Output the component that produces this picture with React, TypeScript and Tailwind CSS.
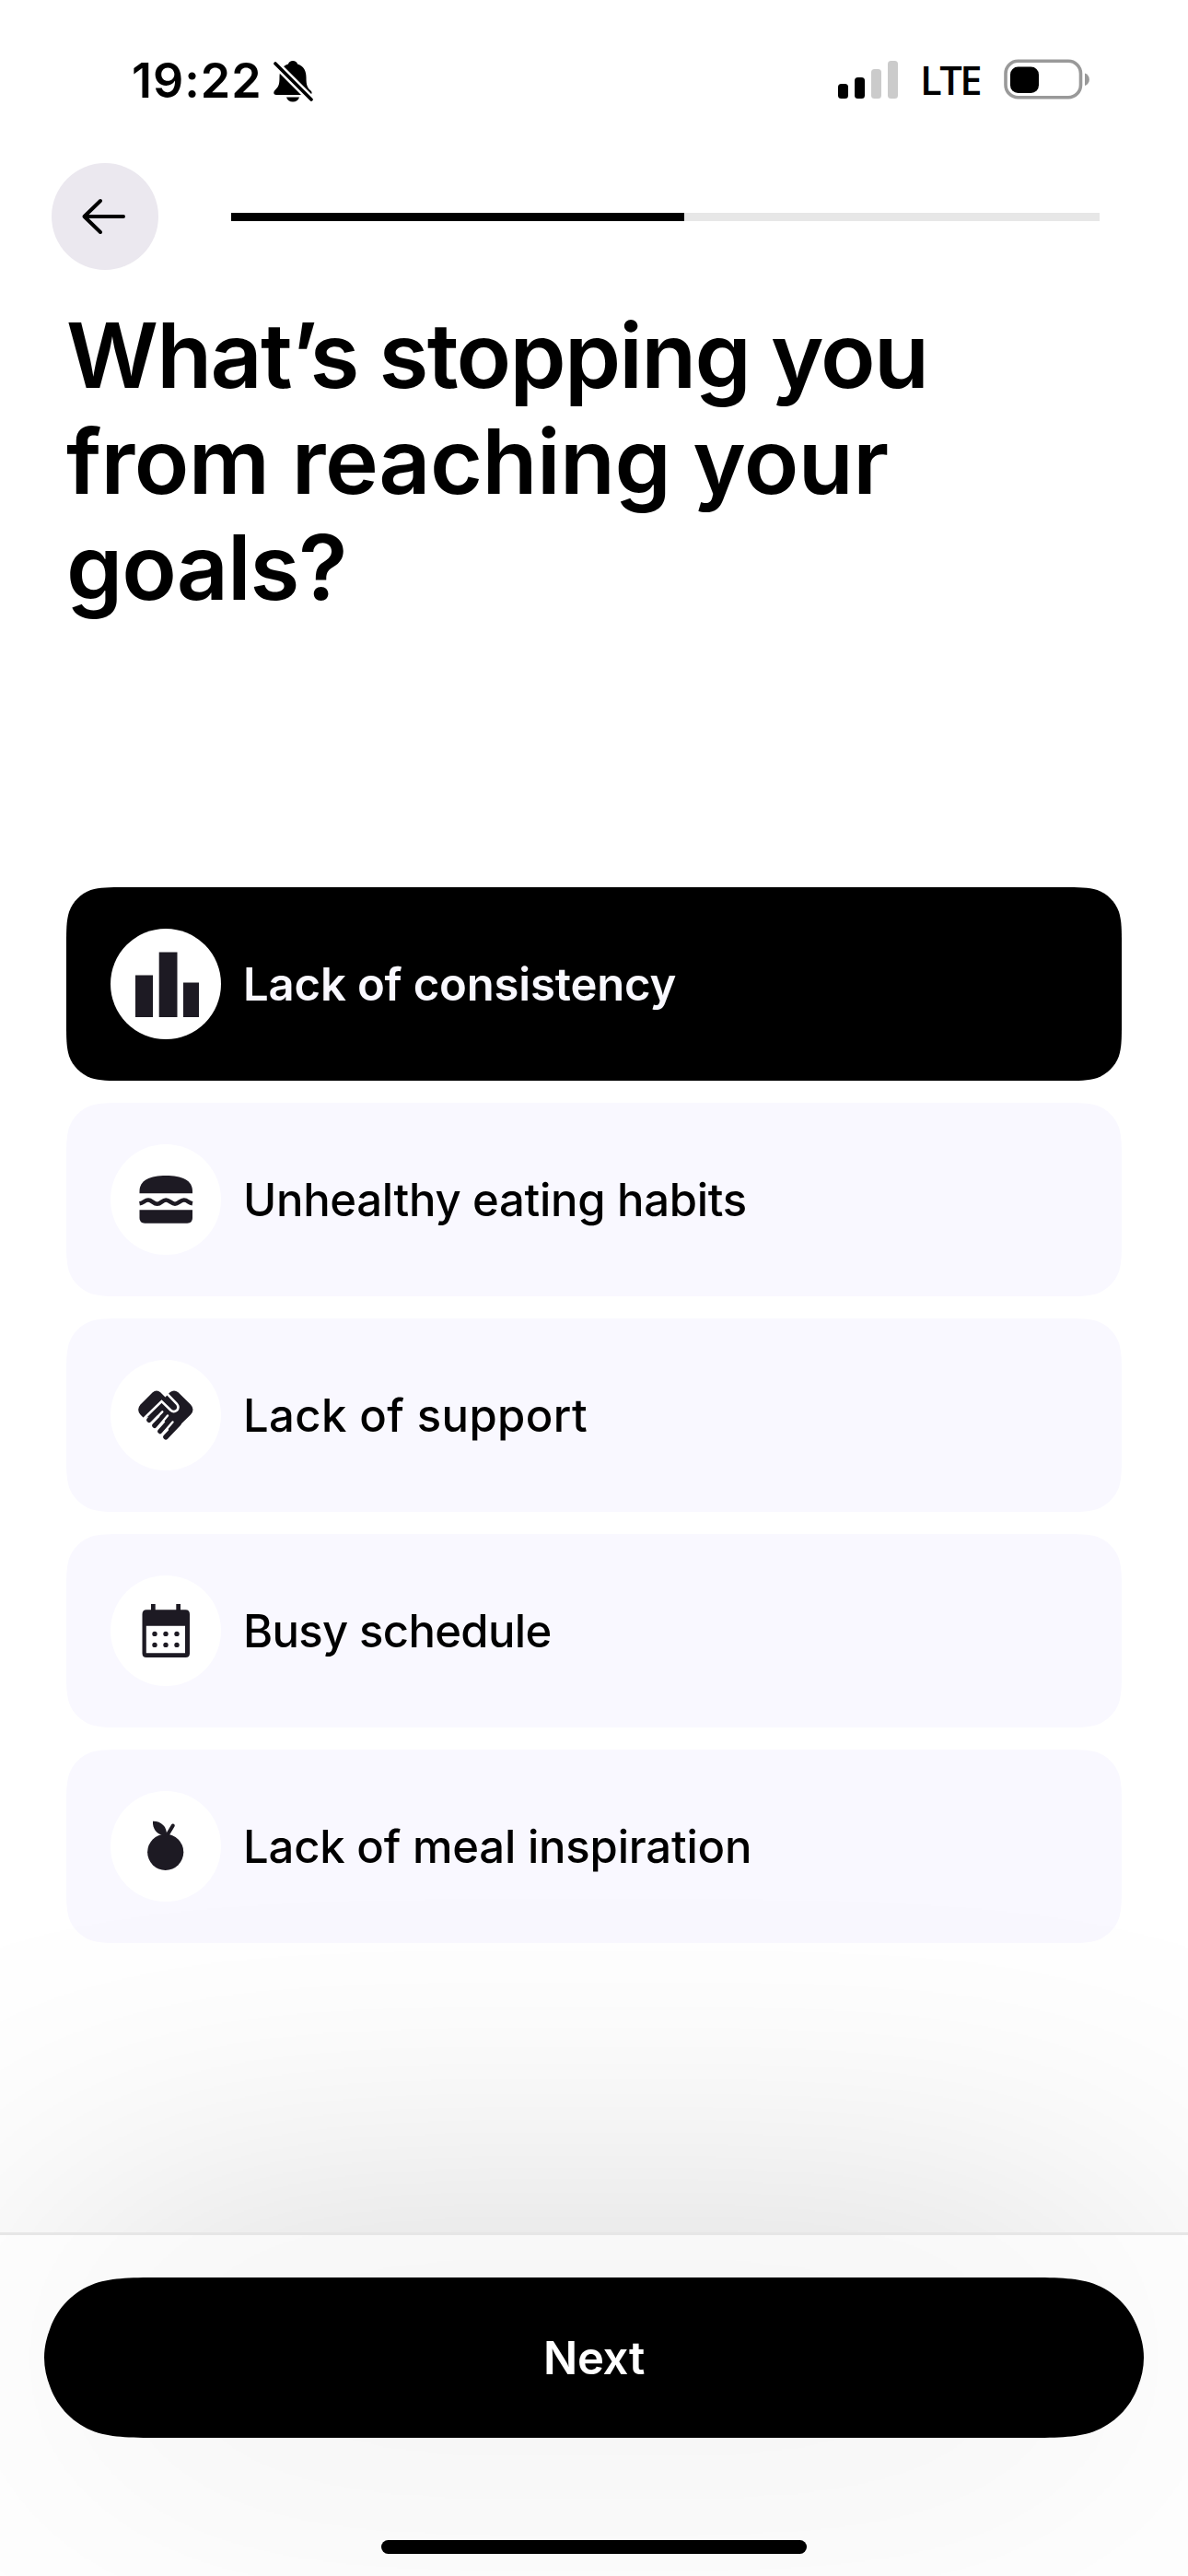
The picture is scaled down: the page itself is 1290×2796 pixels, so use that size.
import type { ReactNode } from "react";

const INK = "#1d1a23";

function BarsIcon() {
  return (
    <svg className="size-[120px]" viewBox="0 0 120 120" fill={INK}>
      <path d="M27 50.5h19V96H27zM52.7 25.5h19.8V96H52.7zM79 58.5h17V96H79z" />
    </svg>
  );
}

function BurgerIcon() {
  return (
    <svg className="size-[120px]" viewBox="0 0 120 120" fill={INK}>
      <path d="M31.5 53.3V51C31.5 39 43 34 60.2 34S89 39 89 51v2.300z" />
      <path
        d="M31.500 64.300C36 63.500 37 60.600 41 60.600S46.500 64.700 50.700 64.700 56 60.600 60.200 60.600 66 64.700 70 64.700 75.500 60.600 79.700 60.600 84.500 63.500 89 64.300"
        fill="none"
        stroke={INK}
        strokeWidth="4.500"
      />
      <path d="M31.500 71.300H89V80q0 5.700-5.700 5.700H37.200q-5.700 0-5.700-5.700z" />
    </svg>
  );
}

function HandshakeIcon() {
  return (
    <svg className="size-[120px]" viewBox="0 0 120 120" fill={INK} strokeLinecap="round">
      <path d="M45.500 35.500Q50 31.500 54.500 35.500L59.500 40.500 64.500 35.300Q69 31.700 73.500 35.300L87 48.500Q92 54 87 59.500L64 82 62 70 52 60 36 63 32.500 59.500Q27.800 54 32.500 48.500z" />
      <g stroke={INK} strokeWidth="5.600">
        <path d="M57 50L42 65.200" />
        <path d="M61 58L48 71.300" />
        <path d="M66 64L54 77.500" />
        <path d="M74 69L60 83.700" />
      </g>
      <path
        d="M61.800 37.200L71.800 47.500Q75 51.500 72 54.800 68.500 57.500 65.200 54.500L55.500 45 36.500 63.500"
        fill="none"
        stroke="#fff"
        strokeWidth="2.600"
      />
      <path
        d="M56.300 56.300L43.500 69.500M62 60.500L49.500 75.500M67.500 67.500L55.500 81.500"
        stroke="#fff"
        strokeWidth="2.400"
      />
    </svg>
  );
}

function CalendarIcon() {
  return (
    <svg className="size-[120px]" viewBox="0 0 120 120" fill={INK}>
      <path d="M44 31h4.700v8H44zM71.300 31H76v8h-4.700z" />
      <path
        fillRule="evenodd"
        d="M39 37.300H81.500Q86 37.300 86 42V84.500Q86 89 81.500 89H39Q34.500 89 34.500 84.500V42Q34.500 37.300 39 37.300zM38.800 54.700V84.200H81V54.700z"
      />
      {[48, 60, 72].map((x) => (
        <g key={x}>
          <circle cx={x} cy="63.400" r="2.700" />
          <circle cx={x} cy="75.400" r="2.700" />
        </g>
      ))}
    </svg>
  );
}

function FruitIcon() {
  return (
    <svg className="size-[120px]" viewBox="0 0 120 120" fill={INK}>
      <circle cx="59.700" cy="66.300" r="19.600" />
      <path d="M46 32.700C55 32.500 61.500 38.500 61 48H57C50 46.500 45.500 41 46 32.700z" />
      <path d="M61.500 48L67.800 37.500" stroke={INK} strokeWidth="4" strokeLinecap="round" />
    </svg>
  );
}

type Option = { label: string; icon: ReactNode; text: string; selected?: boolean };

const options: Option[] = [
  { label: "Lack of consistency", icon: <BarsIcon />, text: "tracking-[-0.15px]", selected: true },
  { label: "Unhealthy eating habits", icon: <BurgerIcon />, text: "tracking-[-0.3px]" },
  { label: "Lack of support", icon: <HandshakeIcon />, text: "tracking-[0.4px]" },
  { label: "Busy schedule", icon: <CalendarIcon />, text: "tracking-[-0.65px]" },
  { label: "Lack of meal inspiration", icon: <FruitIcon />, text: "tracking-[-0.2px]" },
];

function OptionCard({ label, icon, text, selected }: Option) {
  return (
    <button
      className={`flex h-[210px] w-full items-center gap-6 px-12 [clip-path:path('M64.200_0H1081.800C1100.300_0_1109.500_0_1119.500_3.100C1130.300_7.100_1138.900_15.700_1142.900_26.500C1146_36.500_1146_45.700_1146_64.200V145.800C1146_164.300_1146_173.500_1142.900_183.500C1138.900_194.300_1130.300_202.900_1119.500_206.900C1109.500_210_1100.300_210_1081.800_210H64.200C45.700_210_36.500_210_26.500_206.900C15.700_202.900_7.100_194.300_3.100_183.500C0_173.500_0_164.300_0_145.800V64.200C0_45.700_0_36.500_3.100_26.500C7.100_15.700_15.700_7.100_26.500_3.100C36.500_0_45.700_0_64.200_0Z')] ${
        selected ? "bg-black text-[#f9f8ff]" : "bg-[#f9f8ff] text-black"
      }`}
    >
      <span className="flex size-[120px] shrink-0 items-center justify-center rounded-full bg-white">
        {icon}
      </span>
      <span
        className={`whitespace-nowrap pt-[2px] text-[49px] leading-[60px] ${selected ? "font-semibold" : "font-medium"} ${text}`}
      >
        {label}
      </span>
    </button>
  );
}

function StatusBar() {
  return (
    <header className="flex h-[177px] items-start justify-between pl-[143px] pr-[106px] pt-[56px]">
      <div className="flex items-center gap-[11px]">
        <span className="text-[52px] font-semibold leading-[64px] tracking-[1px]">19:22</span>
        <svg className="mb-px h-[48px] w-[44px]" viewBox="0 0 44 48">
          <path d="M22 2c2.500 0 4.500 1.500 5 3.500C34 8 36.500 13 36.500 20c0 8 1 11 5 14.500 2 2 1 4.500-1.500 4.500H4c-3 0-3.500-3-1.500-5C6.500 30 7.500 28 7.500 20 7.500 13 10 8 17 5.500 17.500 3.500 19.500 2 22 2zM15 41.500h14c-1 3.500-3.500 5-7 5s-6-1.500-7-5z" />
          <path d="M3 5l39 39" stroke="#fff" strokeWidth="8.500" />
          <path d="M3 5l39 39" stroke="#000" strokeWidth="3.600" strokeLinecap="round" />
        </svg>
      </div>
      <div className="flex items-center pt-[4px]">
        <svg className="mb-[2px] h-[44px] w-[66px]" viewBox="0 0 66 44">
          <rect x="0" y="28" width="11" height="16" rx="3.500" />
          <rect x="18" y="21" width="11" height="23" rx="3.500" />
          <rect x="36" y="12" width="11" height="32" rx="3.500" fill="#cbcbcb" />
          <rect x="54" y="3" width="11" height="41" rx="3.500" fill="#cbcbcb" />
        </svg>
        <span className="ml-[23px] w-[91px] pt-[2px] font-['Open_Sans'] text-[43.500px] font-semibold leading-[50px] tracking-[-2.500px]">
          LTE
        </span>
        <svg className="h-[44px] w-[94px]" viewBox="0 0 94 44">
          <rect x="2" y="2.200" width="81.500" height="39.600" rx="13.500" fill="none" stroke="#999" strokeWidth="3.600" />
          <rect x="7" y="8.500" width="31" height="28.500" rx="8.500" />
          <path d="M88 15.500c6.500 2 6.500 11.500 0 13.500z" fill="#999" />
        </svg>
      </div>
    </header>
  );
}

export default function App() {
  return (
    <div className="flex h-[2796px] w-[1290px] flex-col overflow-hidden bg-white font-['Inter',sans-serif] text-black">
      <StatusBar />

      <div className="flex h-[116px] items-center pl-[56px]">
        <button className="flex size-[116px] items-center justify-center rounded-full bg-[#ebe8ef]">
          <svg
            className="size-[60px]"
            viewBox="0 0 60 60"
            fill="none"
            stroke="#000"
            strokeWidth="4"
            strokeLinecap="round"
            strokeLinejoin="round"
          >
            <path d="M50 30H7.500M25 13L7.500 30 25 47" />
          </svg>
        </button>
        <div className="ml-[79px] mt-px h-[9px] w-[943px] bg-[#e7e7e7]">
          <div className="h-full w-[492px] bg-black" />
        </div>
      </div>

      <h1 className="mt-[35px] flex flex-col pl-[72px] text-[98px] font-semibold leading-[115px]">
        <span className="tracking-[-1.750px]">What’s stopping you</span>
        <span className="tracking-[-0.550px]">from reaching your</span>
        <span className="tracking-[-1.1px]">goals?</span>
      </h1>

      <main className="mt-[290px] flex flex-col gap-6 px-[72px]">
        {options.map((o) => (
          <OptionCard key={o.label} {...o} />
        ))}
      </main>

      <footer className="relative mt-auto h-[373px] shrink-0">
        <div className="absolute inset-x-12 top-[49px] h-[174px] rounded-full bg-black/27 blur-[190px]" />
        <div className="relative flex h-full flex-col items-center border-t-[3px] border-[#e6e6e6] bg-white/65 pt-[46px]">
          <button className="h-[174px] w-[1194px] bg-black pt-[2px] text-[49px] font-semibold leading-[60px] tracking-[-0.3px] text-white [clip-path:path('M133_0H1061C1099.300_0_1118.400_0_1139_6.500C1161.600_14.700_1179.300_32.400_1187.500_54.900C1191.500_65_1194_76_1194_87C1194_98_1191.500_109_1187.500_119.100C1179.300_141.600_1161.600_159.300_1139_167.500C1118.400_174_1099.300_174_1061_174H133C94.700_174_75.600_174_55_167.500C32.400_159.300_14.700_141.600_6.500_119.100C2.500_109_0_98_0_87C0_76_2.500_65_6.500_54.900C14.700_32.400_32.400_14.700_55_6.500C75.600_0_94.700_0_133_0Z')]">
            Next
          </button>
          <div className="mt-[111px] h-[15px] w-[462px] rounded-full bg-black" />
        </div>
      </footer>
    </div>
  );
}
